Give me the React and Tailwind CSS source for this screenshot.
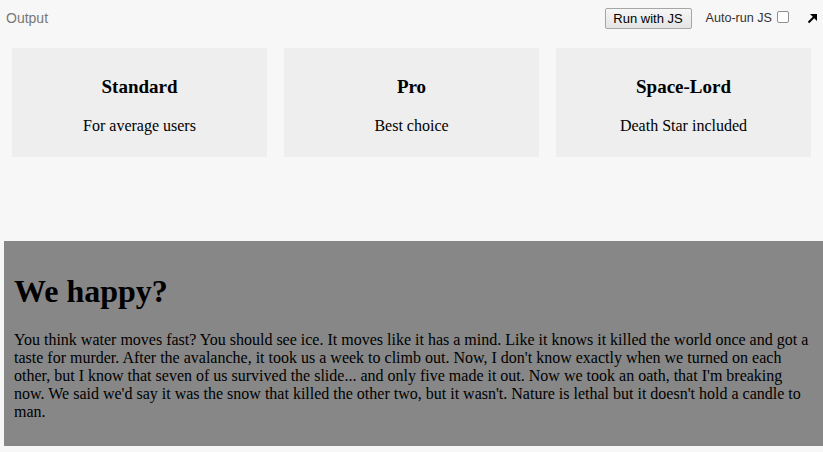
const PLANS = [
  { name: "Standard", blurb: "For average users" },
  { name: "Pro", blurb: "Best choice" },
  { name: "Space-Lord", blurb: "Death Star included" },
];

const STORY =
  "You think water moves fast? You should see ice. It moves like it has a mind. Like it knows it killed the world once and got a taste for murder. After the avalanche, it took us a week to climb out. Now, I don't know exactly when we turned on each other, but I know that seven of us survived the slide... and only five made it out. Now we took an oath, that I'm breaking now. We said we'd say it was the snow that killed the other two, but it wasn't. Nature is lethal but it doesn't hold a candle to man.";

function TopBar() {
  return (
    <div className="flex h-[36px] items-center pl-[6px] pr-[5px] font-['Liberation_Sans',Arial,sans-serif] text-[13px]">
      <div className="text-[14px] text-[#777]">Output</div>
      <div className="ml-auto flex items-center">
        <button className="h-[21px] w-[87px] rounded-[2px] border border-[#a6a6a6] bg-gradient-to-b from-[#f6f6f6] to-[#e4e4e4] text-[13px] text-black">
          Run with JS
        </button>
        <span className="ml-[14px] text-[12.6px] text-[#333]">Auto-run JS</span>
        <span className="mb-[3px] ml-[5px] inline-block h-[12px] w-[12px] rounded-[2px] border border-[#8f8f8f] bg-white" />
        <svg className="ml-[18px]" width="11" height="11" viewBox="0 0 11 11">
          <path d="M1.5 9.5 L8.5 2.5" stroke="#000" strokeWidth="2" />
          <path d="M3 1 H10 V8 Z" fill="#000" />
        </svg>
      </div>
    </div>
  );
}

function PlanCard({ plan }) {
  return (
    <div className="flex h-[109px] flex-col items-center bg-[#eeeeee] pt-[27px] text-black">
      <div className="text-[19px] font-bold leading-[24px]">{plan.name}</div>
      <div className="mt-[17px] text-[16px] leading-[20px]">{plan.blurb}</div>
    </div>
  );
}

export default function App() {
  return (
    <div className="h-[452px] w-[823px] overflow-hidden bg-[#f7f7f7] font-['Liberation_Serif','Times_New_Roman',serif]">
      <TopBar />
      <div className="mt-[12px] grid grid-cols-3 gap-[17px] px-[12px]">
        {PLANS.map((plan) => (
          <PlanCard key={plan.name} plan={plan} />
        ))}
      </div>
      <div className="ml-[4px] mt-[84px] h-[205px] bg-[#878787] px-[10px] pt-[32px] text-black">
        <h1 className="text-[32px] font-bold leading-[37px]">We happy?</h1>
        <p className="mt-[21px] text-[16px] leading-[18px]">{STORY}</p>
      </div>
    </div>
  );
}
